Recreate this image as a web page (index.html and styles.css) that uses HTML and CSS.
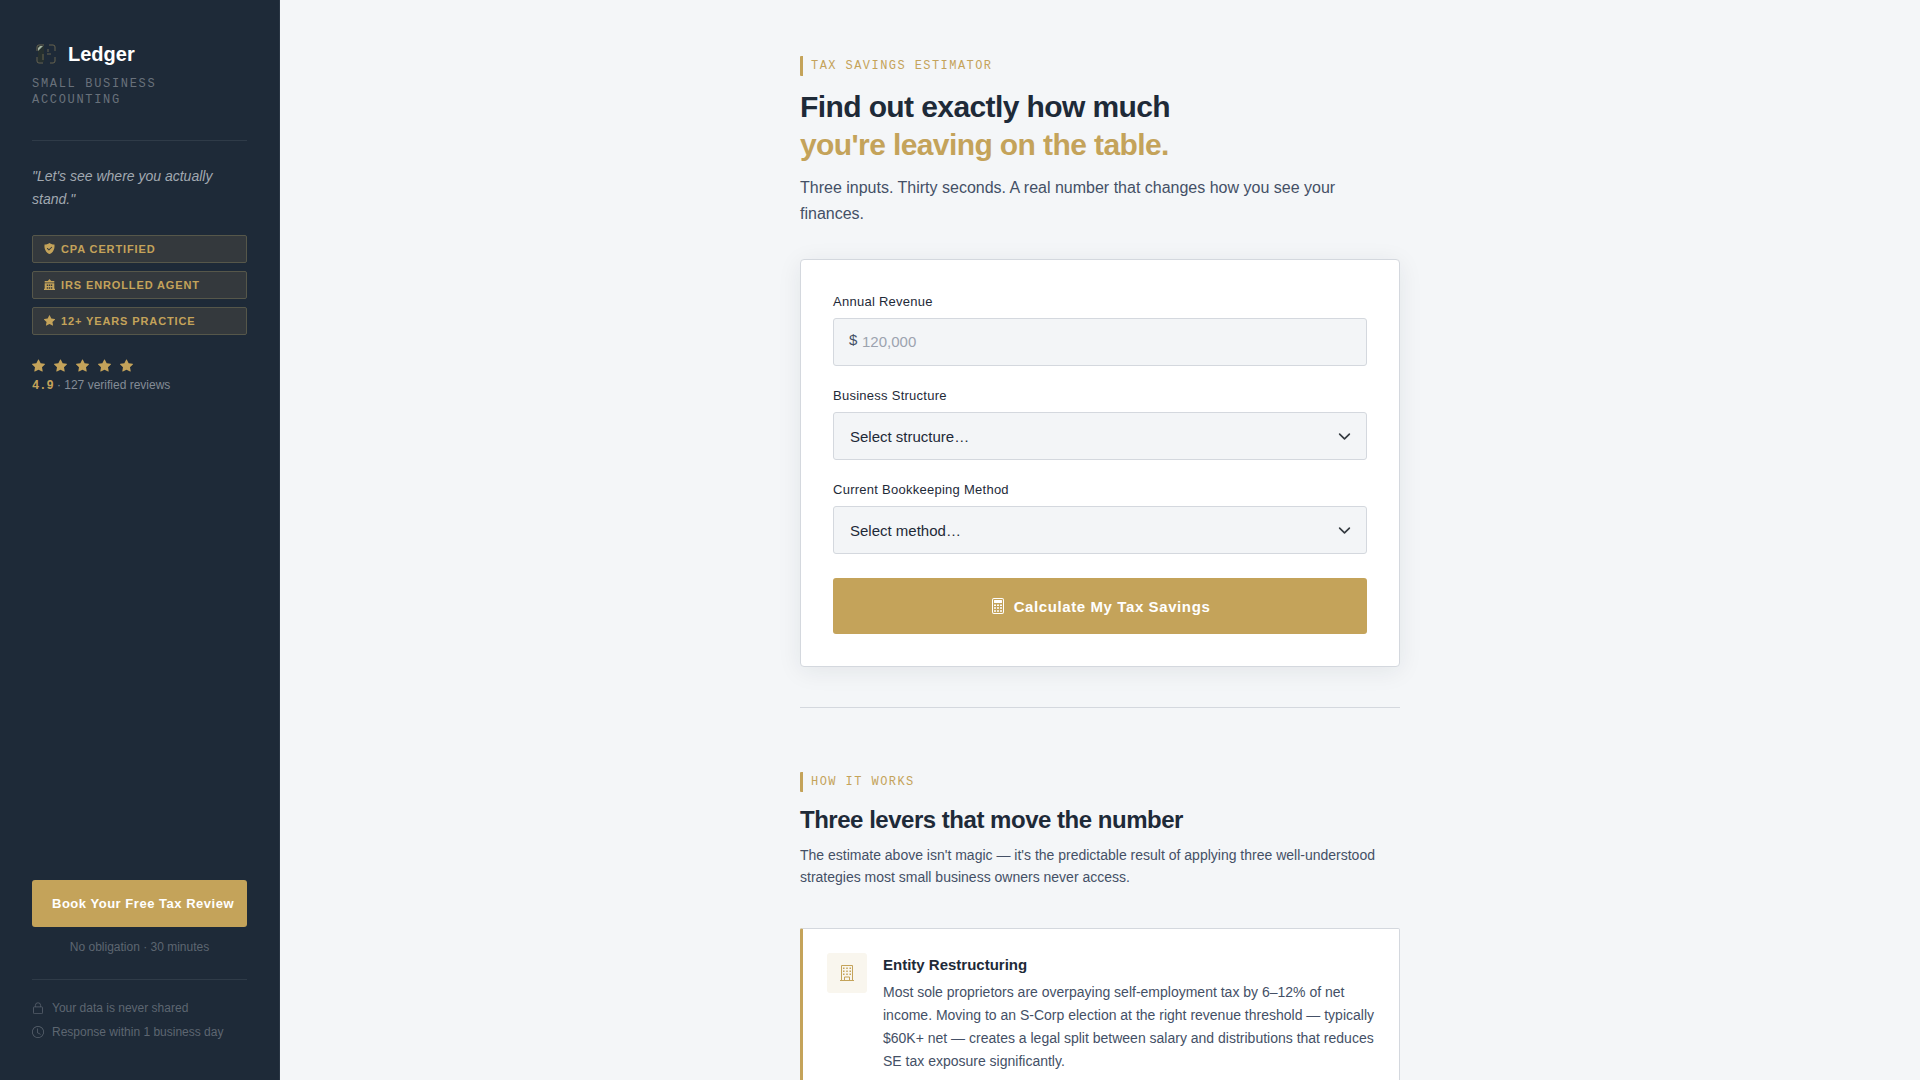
FILE: index.html
```html
<!DOCTYPE html>
<html lang="en">
<head>
<meta charset="utf-8">
<meta name="viewport" content="width=device-width, initial-scale=1">
<title>Ledger</title>
<link rel="stylesheet" href="styles.css">
</head>
<body>
<svg class="sprite" aria-hidden="true">
  <symbol id="star" viewBox="0 0 16 16"><path d="M3.612 15.443c-.386.198-.824-.149-.746-.592l.83-4.73L.173 6.765c-.329-.314-.158-.888.283-.95l4.898-.696L7.538.792c.197-.39.73-.39.927 0l2.184 4.327 4.898.696c.441.062.612.636.282.95l-3.522 3.356.83 4.73c.078.443-.36.79-.746.592L8 13.187l-4.389 2.256z"/></symbol>
  <symbol id="shield" viewBox="0 0 16 16"><path fill-rule="evenodd" d="M8 0C7 .8 4 2.300.8 2.300.3 6 1 9.500 3 12.200 4.600 14.400 6.800 15.500 8 16c1.200-.5 3.400-1.600 5-3.800 2-2.700 2.700-6.200 2.200-9.900C12 2.300 9 .8 8 0zm3.650 5.650a.7.7 0 0 1 0 1l-4 4a.7.7 0 0 1-1 0l-2.200-2.200a.7.7 0 0 1 1-1l1.700 1.700 3.500-3.500a.7.7 0 0 1 1 0z"/></symbol>
  <symbol id="bank" viewBox="0 0 16 16"><path fill-rule="evenodd" d="M8 0l2.500 3H15v2.200H1V3h4.500zM1 6.200h14V14h1v2H0v-2h1zM4 8v2h2V8zm3 0v2h2V8zm3 0v2h2V8zm-6 4v2h2v-2zm3 0v2h2v-2zm3 0v2h2v-2z"/></symbol>
  <symbol id="lock" viewBox="0 0 16 16"><path fill="none" stroke="currentColor" d="M4.500 6.500V4.500a3.500 3.500 0 0 1 7 0v2M3 6.500h10a1 1 0 0 1 1 1v7a1 1 0 0 1-1 1H3a1 1 0 0 1-1-1v-7a1 1 0 0 1 1-1z"/></symbol>
  <symbol id="clock" viewBox="0 0 16 16"><path d="M8 3.500a.5.5 0 0 0-1 0V9a.5.5 0 0 0 .252.434l3.500 2a.5.5 0 0 0 .496-.868L8 8.710z"/><path d="M8 16A8 8 0 1 0 8 0a8 8 0 0 0 0 16m7-8A7 7 0 1 1 1 8a7 7 0 0 1 14 0"/></symbol>
  <symbol id="calculator" viewBox="0 0 16 16"><path d="M12 1a1 1 0 0 1 1 1v12a1 1 0 0 1-1 1H4a1 1 0 0 1-1-1V2a1 1 0 0 1 1-1zM4 0a2 2 0 0 0-2 2v12a2 2 0 0 0 2 2h8a2 2 0 0 0 2-2V2a2 2 0 0 0-2-2z"/><path d="M4 2.500a.5.5 0 0 1 .5-.5h7a.5.5 0 0 1 .5.5v2a.5.5 0 0 1-.5.5h-7a.5.5 0 0 1-.5-.5zM4 6.500h2v1.500H4zm3 0h2v1.500H7zm3 0h2v1.500h-2zM4 9.300h2v1.500H4zm3 0h2v1.500H7zm3 0h2v1.500h-2zM4 12.300h2v1.500H4zm3 0h2v1.500H7zm3 0h2v1.500h-2z"/></symbol>
  <symbol id="building" viewBox="0 0 16 16"><path d="M4 2.500h1.500V4H4zm3.250 0h1.500V4h-1.500zm3.250 0H12V4h-1.500zM4 5.500h1.500V7H4zm3.250 0h1.500V7h-1.500zm3.250 0H12V7h-1.500zM4 8.500h1.500V10H4zm3.250 0h1.500V10h-1.500zm3.250 0H12V10h-1.500z"/><path fill="none" stroke="currentColor" d="M2.500.5h11v15h-11zM5.500 15.500v-3.500h5v3.500"/><path d="M1 15h14v1H1z"/></symbol>
  <symbol id="chevron" viewBox="0 0 16 16"><path fill="none" stroke="currentColor" stroke-width="2" stroke-linecap="round" stroke-linejoin="round" d="M2 5l6 6 6-6"/></symbol>
</svg>
<div class="layout">
  <aside class="sidebar">
    <header class="brand">
      <div class="brand-name">
        <svg class="logo" viewBox="0 0 24 24" aria-hidden="true">
          <path class="logo-body" d="M4 4h6v16H4z"/>
          <path class="logo-edge" d="M3 9V5q0-2 2-2h5M15 3h4q2 0 2 2v4M21 15v4q0 2-2 2h-3M9 21H5q-2 0-2-2v-4M9 12v6M13 12h4M14 7v3"/>
          <path class="logo-shine" d="M4 9V6l2-2h3z"/>
        </svg>
        <span>Ledger</span>
      </div>
      <div class="tagline">SMALL BUSINESS ACCOUNTING</div>
    </header>
    <p class="quote">"Let's see where you actually stand."</p>
    <ul class="badges">
      <li><svg><use href="#shield"/></svg>CPA CERTIFIED</li>
      <li><svg><use href="#bank"/></svg>IRS ENROLLED AGENT</li>
      <li><svg><use href="#star"/></svg>12+ YEARS PRACTICE</li>
    </ul>
    <div class="stars"><svg><use href="#star"/></svg><svg><use href="#star"/></svg><svg><use href="#star"/></svg><svg><use href="#star"/></svg><svg><use href="#star"/></svg></div>
    <div class="rating"><strong>4.9</strong> · 127 verified reviews</div>
    <div class="sidebar-foot">
      <a class="cta" href="#review">Book Your Free Tax Review</a>
      <p class="cta-note">No obligation · 30 minutes</p>
      <ul class="assurances">
        <li><svg><use href="#lock"/></svg>Your data is never shared</li>
        <li><svg><use href="#clock"/></svg>Response within 1 business day</li>
      </ul>
    </div>
  </aside>
  <main class="main">
    <div class="content">
      <section class="estimator">
        <div class="eyebrow">TAX SAVINGS ESTIMATOR</div>
        <h1>Find out exactly how much <span>you're leaving on the table.</span></h1>
        <p class="lead">Three inputs. Thirty seconds. A real number that changes how you see your finances.</p>
        <form class="form-card">
          <div class="field">
            <label for="revenue">Annual Revenue</label>
            <div class="money"><span>$</span><input id="revenue" type="text" placeholder="120,000"></div>
          </div>
          <div class="field">
            <label for="structure">Business Structure</label>
            <div class="picker"><select id="structure"><option>Select structure…</option></select><svg><use href="#chevron"/></svg></div>
          </div>
          <div class="field">
            <label for="method">Current Bookkeeping Method</label>
            <div class="picker"><select id="method"><option>Select method…</option></select><svg><use href="#chevron"/></svg></div>
          </div>
          <button class="submit" type="button"><svg><use href="#calculator"/></svg>Calculate My Tax Savings</button>
        </form>
      </section>
      <section class="how">
        <div class="eyebrow">HOW IT WORKS</div>
        <h2>Three levers that move the number</h2>
        <p class="intro">The estimate above isn't magic — it's the predictable result of applying three well-understood strategies most small business owners never access.</p>
        <article class="lever">
          <div class="lever-icon"><svg><use href="#building"/></svg></div>
          <div>
            <h3>Entity Restructuring</h3>
            <p>Most sole proprietors are overpaying self-employment tax by 6–12% of net income. Moving to an S-Corp election at the right revenue threshold — typically $60K+ net — creates a legal split between salary and distributions that reduces SE tax exposure significantly.</p>
          </div>
        </article>
      </section>
    </div>
  </main>
</div>
</body>
</html>
```
FILE: styles.css
```css
:root {
  --navy: #1e2a38;
  --gold: #c4a35a;
  --slate: #445066;
  --line: #d4d8de;
  --paper: #f4f6f8;
}
* { box-sizing: border-box; margin: 0; padding: 0; }
body {
  font-family: "Liberation Sans", Arial, sans-serif;
  color: var(--navy);
  background: var(--paper);
}
ul { list-style: none; }
svg { fill: currentColor; flex: none; }
.sprite { display: none; }
.layout { display: flex; }

.sidebar {
  position: sticky;
  top: 0;
  flex: none;
  display: flex;
  flex-direction: column;
  width: 280px;
  height: 100vh;
  padding: 40px 32px;
  border-right: 1px solid #2a3644;
  background: var(--navy);
}
.brand {
  padding-bottom: 32px;
  border-bottom: 1px solid #2f3b48;
}
.brand-name {
  display: flex;
  align-items: center;
  gap: 8px;
  height: 28px;
  font-size: 20px;
  font-weight: 700;
  color: #fff;
}
.logo { width: 28px; height: 28px; padding: 2px; }
.logo-body { fill: #26302f; }
.logo-edge { fill: none; stroke: #67634f; stroke-width: 1; }
.logo-shine { fill: #a3b3a0; }
.tagline {
  margin-top: 8px;
  font: 12px/16px "Liberation Mono", monospace;
  letter-spacing: 0.14em;
  color: #69717b;
}
.quote {
  margin-top: 24px;
  font-size: 14px;
  line-height: 23px;
  font-style: italic;
  color: #a1a8b0;
}
.badges {
  display: flex;
  flex-direction: column;
  gap: 8px;
  margin-top: 24px;
}
.badges li {
  display: flex;
  align-items: center;
  gap: 6px;
  height: 28px;
  padding: 0 11px 1px;
  border: 1px solid #56574a;
  border-radius: 2px;
  background: #34393d;
  color: var(--gold);
  font-size: 11px;
  font-weight: 700;
  letter-spacing: 0.08em;
}
.badges svg { width: 11px; height: 11px; }
.stars {
  display: flex;
  gap: 9px;
  margin-top: 24px;
  color: var(--gold);
}
.stars svg { width: 13px; height: 13px; }
.rating {
  margin-top: 5px;
  font-size: 12px;
  line-height: 16px;
  color: #848c96;
}
.rating strong {
  font-family: "Liberation Mono", monospace;
  color: var(--gold);
}
.sidebar-foot { margin-top: auto; }
.cta {
  display: block;
  padding: 0 12px 0 20px;
  border-radius: 3px;
  background: var(--gold);
  color: #fff;
  font-size: 13px;
  font-weight: 700;
  line-height: 47px;
  letter-spacing: 0.04em;
  text-decoration: none;
  white-space: nowrap;
}
.cta-note {
  margin-top: 12px;
  font-size: 12px;
  line-height: 16px;
  text-align: center;
  color: #5d6671;
}
.assurances {
  display: flex;
  flex-direction: column;
  gap: 8px;
  margin-top: 24px;
  padding-top: 20px;
  border-top: 1px solid #2f3b48;
}
.assurances li {
  display: flex;
  align-items: center;
  gap: 8px;
  font-size: 12px;
  line-height: 16px;
  color: #5d6671;
}
.assurances svg { width: 12px; height: 12px; }

.main { flex: 1; padding: 56px 40px; }
.content { max-width: 600px; margin: 0 auto; }
.eyebrow {
  padding-left: 8px;
  border-left: 3px solid var(--gold);
  border-radius: 1px;
  font: 12px/20px "Liberation Mono", monospace;
  letter-spacing: 0.12em;
  color: var(--gold);
}
h1 {
  margin-top: 12px;
  font-size: 30px;
  line-height: 38px;
  letter-spacing: -0.02em;
}
h1 span { display: block; color: var(--gold); }
.lead {
  margin-top: 11px;
  font-size: 16px;
  line-height: 26px;
  color: var(--slate);
}
.form-card {
  display: flex;
  flex-direction: column;
  gap: 20px;
  margin-top: 32px;
  padding: 32px;
  border: 1px solid var(--line);
  border-radius: 4px;
  background: #fff;
  box-shadow: 0 4px 24px rgba(30, 42, 56, 0.08);
}
.field label {
  display: block;
  margin-bottom: 6px;
  font-size: 13px;
  line-height: 20px;
  letter-spacing: 0.02em;
}
.money, .picker { position: relative; }
.money span {
  position: absolute;
  left: 16px;
  top: 0;
  font-size: 15px;
  line-height: 44px;
  color: var(--slate);
}
.money input, .picker select {
  display: block;
  width: 100%;
  height: 48px;
  padding: 0 16px;
  border: 1px solid var(--line);
  border-radius: 3px;
  background: #f3f5f7;
  color: var(--navy);
  font: 15px "Liberation Sans", Arial, sans-serif;
  appearance: none;
}
.money input { padding: 0 16px 2px 28px; }
.money input::placeholder { color: #9ca3af; }
.picker svg {
  position: absolute;
  right: 16px;
  top: 18px;
  width: 13px;
  height: 13px;
  color: #343a40;
  pointer-events: none;
}
.submit {
  display: flex;
  align-items: center;
  justify-content: center;
  gap: 8px;
  height: 56px;
  margin-top: 4px;
  border: 0;
  border-radius: 3px;
  background: var(--gold);
  color: #fff;
  font: 700 15px "Liberation Sans", Arial, sans-serif;
  letter-spacing: 0.04em;
}
.submit svg { width: 16px; height: 16px; }

.how {
  margin-top: 40px;
  padding-top: 64px;
  border-top: 1px solid var(--line);
}
h2 {
  margin-top: 12px;
  font-size: 24px;
  line-height: 32px;
  letter-spacing: -0.02em;
}
.intro {
  margin-top: 8px;
  font-size: 14px;
  line-height: 22px;
  color: var(--slate);
}
.lever {
  display: flex;
  align-items: flex-start;
  gap: 16px;
  margin-top: 40px;
  padding: 24px;
  border: 1px solid var(--line);
  border-left: 3px solid var(--gold);
  border-radius: 2px;
  background: #fff;
}
.lever-icon {
  flex: none;
  display: grid;
  place-items: center;
  width: 40px;
  height: 40px;
  border-radius: 3px;
  background: #f9f6ee;
  color: var(--gold);
}
.lever-icon svg { width: 16px; height: 16px; }
.lever h3 {
  font-size: 15px;
  line-height: 24px;
}
.lever p {
  margin-top: 4px;
  font-size: 14px;
  line-height: 23px;
  color: var(--slate);
}
```
